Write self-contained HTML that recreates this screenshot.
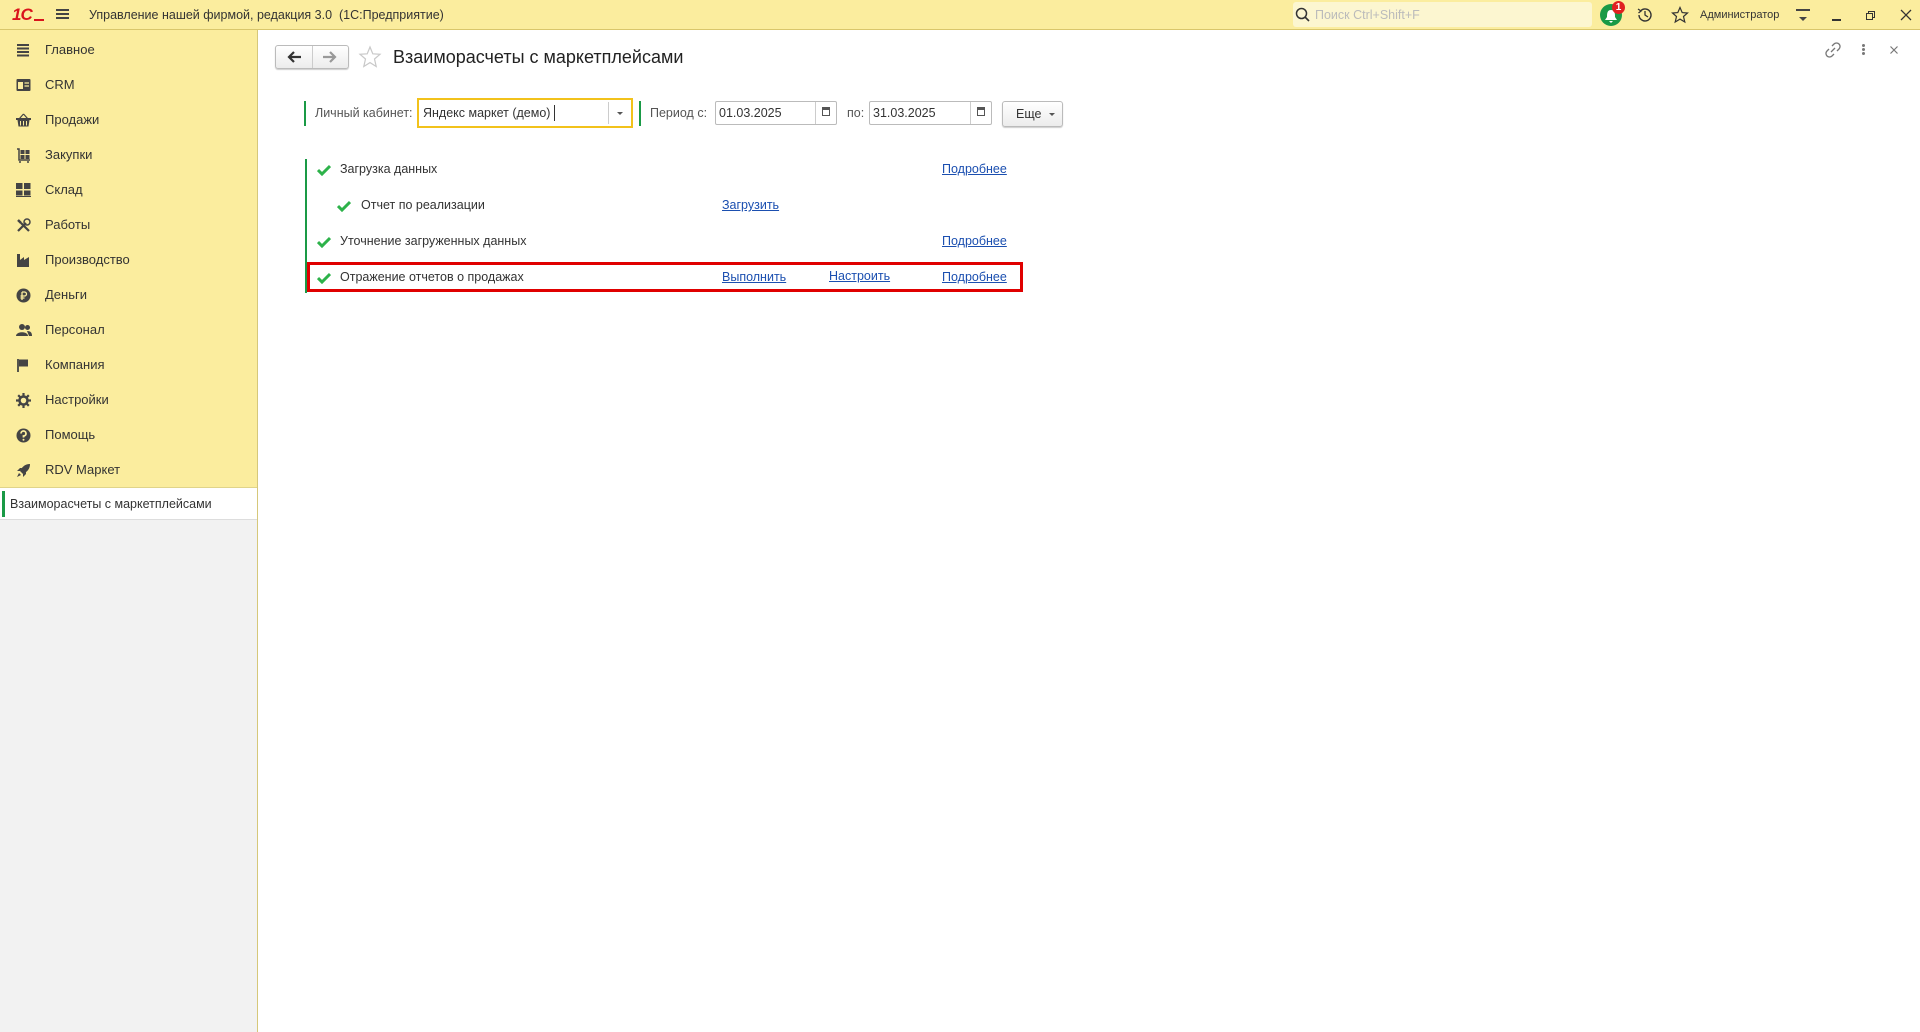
<!DOCTYPE html>
<html><head><meta charset="utf-8">
<style>
*{box-sizing:border-box;margin:0;padding:0}
body{width:1920px;height:1032px;overflow:hidden;background:#fff;font-family:"Liberation Sans",Arial,sans-serif;color:#333;position:relative;font-size:12.5px}
.a{position:absolute}
#top{left:0;top:0;width:1920px;height:30px;background:#fbed9e;border-bottom:1px solid #d9c66b}
#side{left:0;top:30px;width:258px;height:1002px;background:#f2f2f2;border-right:1px solid #d6c87a}
#sidey{left:0;top:0;width:257px;height:457px;background:#fbed9e}
.it{position:absolute;left:0;width:257px;height:35px;line-height:35px;font-size:13px;color:#333}
.it span{position:absolute;left:45px}
.it svg{position:absolute;left:16px;top:11px}
#sel{left:0;top:457px;width:257px;height:33px;background:#fff;border-bottom:1px solid #ddd;border-top:1px solid #e0d48a}
#sel:before{content:"";position:absolute;left:2px;top:3px;width:3px;height:26px;background:#1a9a46}
#sel span{position:absolute;left:10px;top:9px;font-size:12.5px;color:#333}
.lnk{color:#1b4fb0;text-decoration:underline;font-size:12.5px}
.t{font-size:12.5px;color:#333}
.chk{width:14px;height:12px}
.inp{border:1px solid #bbb;background:#fff;height:24px;border-radius:2px}
</style></head><body>
<div id="top" class="a">
 <div class="a" style="left:12px;top:5px;font-weight:bold;color:#d9141c;font-size:17px;letter-spacing:-1px;font-style:italic">1С</div>
 <div class="a" style="left:34px;top:19px;width:10px;height:2px;background:#d9141c"></div>
 <div class="a" style="left:56px;top:9px;width:13px;height:1.5px;background:#444;box-shadow:0 4px 0 #444,0 8px 0 #444"></div>
 <div class="a" style="left:89px;top:8px;font-size:12.5px;color:#333">Управление нашей фирмой, редакция 3.0&nbsp; (1С:Предприятие)</div>
 <div class="a" style="left:1293px;top:2px;width:299px;height:25px;background:#fcf6d0;border-radius:3px"></div>
 <svg class="a" style="left:1295px;top:7px" width="16" height="16"><circle cx="6.5" cy="6.5" r="5" fill="none" stroke="#333" stroke-width="1.5"/><line x1="10" y1="10" x2="14" y2="14" stroke="#333" stroke-width="1.6"/></svg>
 <div class="a" style="left:1315px;top:8px;font-size:12.5px;color:#bbb">Поиск Ctrl+Shift+F</div>
 <div class="a" style="left:1600px;top:4px;width:22px;height:22px;border-radius:50%;background:#1a9a46"></div>
 <svg class="a" style="left:1604px;top:8px" width="14" height="16"><path d="M7 2 C3 2 3 6 3 9 L1 12 H13 L11 9 C11 6 11 2 7 2Z M5 13 H9 L7 15Z" fill="#fff"/></svg>
 <div class="a" style="left:1612px;top:1px;width:13px;height:13px;border-radius:50%;background:#e02020;color:#fff;font-size:10px;font-weight:bold;text-align:center;line-height:13px">1</div>
 <svg class="a" style="left:1636px;top:6px" width="18" height="18"><path d="M3 9 A6 6 0 1 0 5 4.5" fill="none" stroke="#333" stroke-width="1.4"/><path d="M2 3 L5 5 L2.5 7" fill="none" stroke="#333" stroke-width="1.3"/><path d="M9 5 V9 L12 11" fill="none" stroke="#333" stroke-width="1.3"/></svg>
 <svg class="a" style="left:1671px;top:6px" width="18" height="18"><path d="M9 1.5 L11.2 6.6 L16.5 7 L12.5 10.5 L13.8 16 L9 13.1 L4.2 16 L5.5 10.5 L1.5 7 L6.8 6.6Z" fill="none" stroke="#333" stroke-width="1.2"/></svg>
 <div class="a" style="left:1700px;top:9px;font-size:11px;color:#333">Администратор</div>
 <div class="a" style="left:1796px;top:9px;width:14px;height:1.5px;background:#444;box-shadow:0 4px 0 -1px #444"></div>
 <div class="a" style="left:1799px;top:17px;width:0;height:0;border-left:4px solid transparent;border-right:4px solid transparent;border-top:4px solid #444"></div>
 <div class="a" style="left:1832px;top:19px;width:9px;height:1.5px;background:#333"></div>
 <div class="a" style="left:1868px;top:11px;width:7px;height:7px;border:1.3px solid #333;background:#fbed9e"></div>
 <div class="a" style="left:1866px;top:13px;width:7px;height:7px;border:1.3px solid #333;background:#fbed9e"></div>
 <svg class="a" style="left:1900px;top:9px" width="12" height="12"><path d="M1 1 L11 11 M11 1 L1 11" stroke="#333" stroke-width="1.3"/></svg>
</div>
<div id="side" class="a">
 <div id="sidey" class="a">
  <div class="it" style="top:2px"><svg width="14" height="14"><path d="M1 2H13M1 5.5H13M1 9H13M1 12.5H13" stroke="#444" stroke-width="2"/></svg><span>Главное</span></div>
  <div class="it" style="top:37px"><svg width="15" height="14"><rect x="0.5" y="1" width="14" height="12" rx="1" fill="#444"/><rect x="2" y="4" width="5" height="7" fill="#fbed9e"/><path d="M8.5 5H13M8.5 8H13" stroke="#fbed9e" stroke-width="1.3"/></svg><span>CRM</span></div>
  <div class="it" style="top:72px"><svg width="15" height="14"><path d="M7.5 1 L3 6 M7.5 1 L12 6" stroke="#444" stroke-width="1.2" fill="none"/><rect x="0" y="5" width="15" height="2" fill="#444"/><path d="M1.5 7 H13.5 L12.5 13.5 H2.5Z" fill="#444"/><path d="M4.5 8V12.5M7.5 8V12.5M10.5 8V12.5" stroke="#fbed9e" stroke-width="1"/></svg><span>Продажи</span></div>
  <div class="it" style="top:107px"><svg width="15" height="15"><path d="M1 1H3V12H14" stroke="#444" stroke-width="1.5" fill="none"/><rect x="4.5" y="2" width="4" height="4" fill="#444"/><rect x="9.5" y="2" width="4" height="4" fill="#444"/><rect x="4.5" y="7" width="4" height="4" fill="#444"/><rect x="9.5" y="7" width="4" height="4" fill="#444"/><circle cx="4" cy="14" r="1" fill="#444"/><circle cx="12" cy="14" r="1" fill="#444"/></svg><span>Закупки</span></div>
  <div class="it" style="top:142px"><svg width="15" height="14"><rect x="0" y="0" width="6.5" height="6" fill="#444"/><rect x="8" y="0" width="6.5" height="6" fill="#444"/><rect x="0" y="7.5" width="6.5" height="5" fill="#444"/><rect x="8" y="7.5" width="6.5" height="5" fill="#444"/><rect x="0" y="13" width="15" height="1" fill="#444"/></svg><span>Склад</span></div>
  <div class="it" style="top:177px"><svg width="15" height="15"><path d="M2 13 L10 5 M5 5 L13 13" stroke="#444" stroke-width="2.2"/><circle cx="11" cy="4" r="3" fill="none" stroke="#444" stroke-width="1.5"/><path d="M2 2 L5 5" stroke="#444" stroke-width="2.5"/></svg><span>Работы</span></div>
  <div class="it" style="top:212px"><svg width="15" height="15"><path d="M1 14V1H4V7L8 4V7L13 4V14Z" fill="#444"/></svg><span>Производство</span></div>
  <div class="it" style="top:247px"><svg width="15" height="15"><circle cx="7.5" cy="7.5" r="7" fill="#444"/><path d="M6 4V12M6 4H8.5A2 2 0 0 1 8.5 8H4.5M4.5 10H8.5" stroke="#fbed9e" stroke-width="1.3" fill="none"/></svg><span>Деньги</span></div>
  <div class="it" style="top:282px"><svg width="16" height="14"><circle cx="6" cy="4" r="3" fill="#444"/><path d="M0 13C0 8 12 8 12 13Z" fill="#444"/><circle cx="11.5" cy="4.5" r="2.5" fill="#444"/><path d="M11 8C15 8 16 10 16 13H13Z" fill="#444"/></svg><span>Персонал</span></div>
  <div class="it" style="top:317px"><svg width="15" height="15"><path d="M2 1V14" stroke="#444" stroke-width="1.8"/><path d="M3 1.5H12V8.5H3Z" fill="#444"/></svg><span>Компания</span></div>
  <div class="it" style="top:352px"><svg width="15" height="15"><circle cx="7.5" cy="7.5" r="4" fill="none" stroke="#444" stroke-width="2.5"/><path d="M7.5 0V3M7.5 12V15M0 7.5H3M12 7.5H15M2.2 2.2L4.3 4.3M10.7 10.7L12.8 12.8M2.2 12.8L4.3 10.7M10.7 4.3L12.8 2.2" stroke="#444" stroke-width="2.2"/></svg><span>Настройки</span></div>
  <div class="it" style="top:387px"><svg width="15" height="15"><circle cx="7.5" cy="7.5" r="7" fill="#444"/><path d="M5 5.5A2.5 2.5 0 1 1 7.5 8V9.5" stroke="#fbed9e" stroke-width="1.8" fill="none"/><circle cx="7.5" cy="11.8" r="1" fill="#fbed9e"/></svg><span>Помощь</span></div>
  <div class="it" style="top:422px"><svg width="15" height="15"><path d="M14 1C9 1 6 4 4 8L7 11C11 9 14 6 14 1Z" fill="#444"/><path d="M4 8L1 8L4 5H6ZM7 11V14L10 11V9Z" fill="#444"/><path d="M3 10L1 14L5 12Z" fill="#444"/></svg><span>RDV Маркет</span></div>
 </div>
 <div id="sel" class="a"><span>Взаиморасчеты с маркетплейсами</span></div>
</div>
<!-- header -->
<div class="a" style="left:275px;top:45px;width:74px;height:24px;border:1px solid #bbb;border-radius:3px;background:linear-gradient(#fff,#ececec);box-shadow:0 1px 1px #ccc"></div>
<div class="a" style="left:312px;top:46px;width:1px;height:22px;background:#ccc"></div>
<svg class="a" style="left:286px;top:50px" width="16" height="14"><path d="M15 7H4M8 2L3 7L8 12" stroke="#333" stroke-width="2.2" fill="none"/></svg>
<svg class="a" style="left:322px;top:50px" width="16" height="14"><path d="M1 7H12M8 2L13 7L8 12" stroke="#999" stroke-width="2.2" fill="none"/></svg>
<svg class="a" style="left:358px;top:45px" width="24" height="24"><path d="M12 2 L14.8 8.8 L22 9.3 L16.5 14 L18.2 21.5 L12 17.6 L5.8 21.5 L7.5 14 L2 9.3 L9.2 8.8Z" fill="none" stroke="#c8c8c8" stroke-width="1.2"/></svg>
<div class="a" style="left:393px;top:47px;font-size:18px;color:#222">Взаиморасчеты с маркетплейсами</div>
<svg class="a" style="left:1825px;top:42px" width="16" height="16"><path d="M6 10 L10 6 M7 4 L9 2 A2.5 2.5 0 0 1 14 7 L12 9 M9 12 L7 14 A2.5 2.5 0 0 1 2 9 L4 7" fill="none" stroke="#777" stroke-width="1.3"/></svg>
<div class="a" style="left:1862px;top:44px;width:3px;height:3px;background:#777;border-radius:50%;box-shadow:0 4px 0 #777,0 8px 0 #777"></div>
<svg class="a" style="left:1890px;top:46px" width="8" height="8"><path d="M0.5 0.5L7.5 7.5M7.5 0.5L0.5 7.5" stroke="#777" stroke-width="1.2"/></svg>
<!-- filters -->
<div class="a" style="left:304px;top:101px;width:2px;height:25px;background:#1a9a46"></div>
<div class="a t" style="left:315px;top:106px;color:#555">Личный кабинет:</div>
<div class="a" style="left:417px;top:98px;width:216px;height:30px;border:2px solid #f2c21b;background:#fff"></div>
<div class="a t" style="left:423px;top:106px">Яндекс маркет (демо)</div>
<div class="a" style="left:554px;top:105px;width:1px;height:16px;background:#333"></div>
<div class="a" style="left:608px;top:102px;width:1px;height:22px;background:#ccc"></div>
<div class="a" style="left:617px;top:112px;border-left:3px solid transparent;border-right:3px solid transparent;border-top:3px solid #555"></div>
<div class="a" style="left:639px;top:101px;width:2px;height:25px;background:#1a9a46"></div>
<div class="a t" style="left:650px;top:106px;color:#555">Период с:</div>
<div class="a inp" style="left:715px;top:101px;width:122px"></div>
<div class="a t" style="left:719px;top:106px">01.03.2025</div>
<div class="a" style="left:815px;top:102px;width:1px;height:22px;background:#ccc"></div>
<div class="a" style="left:822px;top:107px;width:8px;height:9px;border:1.5px solid #555;border-top-width:3px"></div>
<div class="a t" style="left:847px;top:106px;color:#555">по:</div>
<div class="a inp" style="left:869px;top:101px;width:123px"></div>
<div class="a t" style="left:873px;top:106px">31.03.2025</div>
<div class="a" style="left:970px;top:102px;width:1px;height:22px;background:#ccc"></div>
<div class="a" style="left:977px;top:107px;width:8px;height:9px;border:1.5px solid #555;border-top-width:3px"></div>
<div class="a" style="left:1002px;top:101px;width:61px;height:26px;border:1px solid #bbb;border-radius:3px;background:linear-gradient(#fff,#ececec);box-shadow:0 1px 1px #ccc"></div>
<div class="a t" style="left:1016px;top:107px">Еще</div>
<div class="a" style="left:1049px;top:113px;border-left:3px solid transparent;border-right:3px solid transparent;border-top:3px solid #555"></div>
<!-- list -->
<div class="a" style="left:305px;top:159px;width:2px;height:134px;background:#1a9a46"></div>
<div class="a" style="left:307px;top:262px;width:716px;height:30px;border:3px solid #e00000"></div>
<svg class="a chk" style="left:317px;top:164px" viewBox="0 0 14 12"><path d="M1 6 L5 10 L13 2" fill="none" stroke="#2db24a" stroke-width="3"/></svg>
<div class="a t" style="left:340px;top:162px">Загрузка данных</div>
<a class="a lnk" style="left:942px;top:162px">Подробнее</a>
<svg class="a chk" style="left:337px;top:200px" viewBox="0 0 14 12"><path d="M1 6 L5 10 L13 2" fill="none" stroke="#2db24a" stroke-width="3"/></svg>
<div class="a t" style="left:361px;top:198px">Отчет по реализации</div>
<a class="a lnk" style="left:722px;top:198px">Загрузить</a>
<svg class="a chk" style="left:317px;top:236px" viewBox="0 0 14 12"><path d="M1 6 L5 10 L13 2" fill="none" stroke="#2db24a" stroke-width="3"/></svg>
<div class="a t" style="left:340px;top:234px">Уточнение загруженных данных</div>
<a class="a lnk" style="left:942px;top:234px">Подробнее</a>
<svg class="a chk" style="left:317px;top:272px" viewBox="0 0 14 12"><path d="M1 6 L5 10 L13 2" fill="none" stroke="#2db24a" stroke-width="3"/></svg>
<div class="a t" style="left:340px;top:270px">Отражение отчетов о продажах</div>
<a class="a lnk" style="left:722px;top:270px">Выполнить</a>
<a class="a lnk" style="left:829px;top:269px">Настроить</a>
<a class="a lnk" style="left:942px;top:270px">Подробнее</a>
</body></html>
